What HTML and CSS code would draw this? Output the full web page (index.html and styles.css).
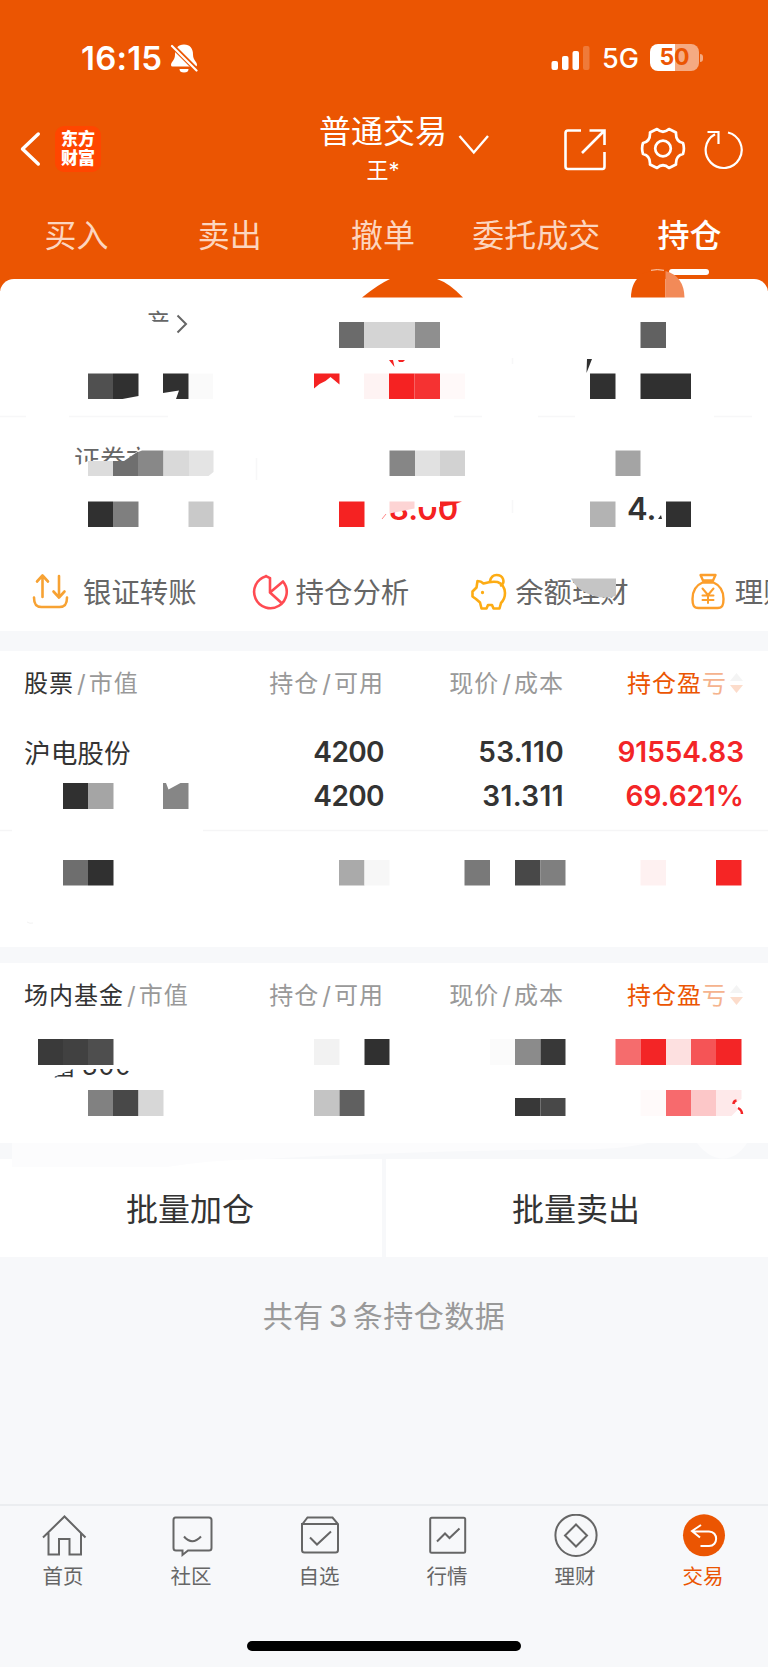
FILE: index.html
```html
<!DOCTYPE html>
<html lang="zh-CN">
<head>
    <meta charset="UTF-8">
    <meta name="viewport" content="width=device-width, initial-scale=1.0">
    <title>普通交易 - 持仓</title>
    <link rel="stylesheet" href="styles.css">
</head>
<body>
    <header class="header">
        <div class="status-bar">
            <span class="time">16:15</span>
            <svg class="bell" width="28" height="30" viewBox="170 42 28 30">
                <path d="M184 43.500c6 0 9 4 9 10 0 6 4 7 4 10.500q0 1.500-1.500 1.500H172.500q-1.500 0-1.500-1.500c0-3.500 4-4.500 4-10.500 0-6 3-10 9-10z" fill="#fff"/>
                <path d="M179.500 68h9a4.500 3.600 0 0 1-9 0z" fill="#fff"/>
                <path d="M171 43.500l26 26" stroke="#eb5502" stroke-width="5"/>
                <path d="M172 45l24.500 24.500" stroke="#fff" stroke-width="2.200" stroke-linecap="round"/>
            </svg>
            <div class="status-right">
                <svg width="40" height="26" viewBox="550 44 40 26" fill="#fff">
                    <rect x="550.500" y="60" width="6.500" height="9" rx="2"/>
                    <rect x="561" y="55" width="6.500" height="14" rx="2"/>
                    <rect x="571.500" y="50" width="6.500" height="19" rx="2"/>
                    <rect x="582" y="45" width="6.500" height="24" rx="2" opacity=".22"/>
                </svg>
                <span class="network">5G</span>
                <div class="battery">50</div>
            </div>
        </div>

        <div class="title-bar">
            <svg width="22" height="36" viewBox="20 130 22 36" fill="none" stroke="#fff" stroke-width="3.400" stroke-linecap="round" stroke-linejoin="round"><path d="M38.300 133L22.500 148l15.800 15"/></svg>
            <div class="logo">东方<br>财富</div>
            <div class="account">
                <div class="account-type">普通交易</div>
                <div class="account-name">王*</div>
            </div>
            <svg class="arrow" width="32" height="22" viewBox="458 132 32 22" fill="none" stroke="#fff" stroke-width="2.400"><path d="M459.500 135l14.300 16.500L488 135"/></svg>
            <div class="tools">
                <svg width="44" height="44" viewBox="563 126 44 44" fill="none" stroke="#fff" stroke-width="2.600">
                    <path d="M581 129.500h-13q-2.500 0-2.500 2.500v33.500q0 2.500 2.500 2.500h34.500q2 0 2-2.500V151"/>
                    <path d="M589.500 129.500h15V144M604 130l-22 22"/>
                </svg>
                <svg class="gear" width="46" height="46" viewBox="640 125 46 46" fill="none" stroke="#fff" stroke-width="2.700" stroke-linejoin="round">
                    <path d="M657 128q6 5.500 12 0l7 3.500q-.5 9 7 10.500 1.800 5.500 0 11-7.500 1.500-7 10.500l-7 3.500q-6-5.500-12 0l-7-3.500q.5-9-7-10.500-1.800-5.500 0-11 7.500-1.500 7-10.500z"/>
                    <circle cx="663" cy="147.500" r="7.800"/>
                </svg>
                <svg width="42" height="42" viewBox="705 126 42 42" fill="none" stroke="#fff" stroke-width="2.200">
                    <path d="M729 130.500a18 18 0 1 1-13 1.700M708.500 130h11v12"/>
                </svg>
            </div>
        </div>

        <nav class="tabs">
            <a class="tab">买入</a>
            <a class="tab">卖出</a>
            <a class="tab">撤单</a>
            <a class="tab">委托成交</a>
            <a class="tab active">持仓</a>
        </nav>
    </header>

    <section class="summary">
        <div class="assets">
            <div class="asset-total">产 <svg width="12" height="20" viewBox="176 313 12 20" fill="none" stroke="#666" stroke-width="2"><path d="M177.500 314.500l8.500 8.500-8.500 8.500"/></svg></div>
            <div class="asset-label">证券市</div>
            <div class="asset-values">
                <span class="asset-profit">8.00</span>
                <span class="asset-cash">4.</span>
            </div>
        </div>
        <div class="shortcuts">
            <div class="shortcut">
                <svg width="51" height="38" viewBox="32 573 51 38" fill="none" stroke="#f7a233" stroke-width="2.600" stroke-linecap="round" stroke-linejoin="round">
                    <path d="M42.500 597v-21M37 581.500l5.500-6 5.500 6M59 576v21M53.500 591.500l5.500 6 5.500-6M34 597.500c0 6 1.500 9.500 7.500 9.500h18c6 0 7.500-3.500 7.500-9.500"/>
                </svg>
                <span>银证转账</span>
            </div>
            <div class="shortcut">
                <svg width="44" height="38" viewBox="252 573 44 38" fill="none" stroke="#ff4b52" stroke-width="2.600" stroke-linecap="round" stroke-linejoin="round">
                    <path d="M266 576.200A16.300 16.300 0 1 0 283 581.500L270 592.500V578M270 592.500l11 10M266 576.200l4 2"/>
                </svg>
                <span>持仓分析</span>
            </div>
            <div class="shortcut">
                <svg width="44" height="38" viewBox="471 573 44 38" fill="none" stroke="#fdac14" stroke-width="2.600" stroke-linecap="round" stroke-linejoin="round">
                    <path d="M477.500 581q3.500 0 6 2.500 8-2.500 14-1.500 7 2.500 7.500 11 0 6-4 10l-1.500 5.500h-6l-1.500-3.500h-4l-1.500 3.500h-5l-1.500-6-4-3.500-3.500-2.500v-5l4-4zM490 581c1-4 3-6 6.500-6 7 0 9 7.500 4.500 10.500"/>
                    <circle cx="482.500" cy="592.500" r=".9" fill="#fdac14" stroke-width="1.500"/>
                </svg>
                <span>余额理财</span>
            </div>
            <div class="shortcut">
                <svg width="44" height="38" viewBox="691 573 44 38" fill="none" stroke="#fc9e2b" stroke-width="2.400" stroke-linecap="round" stroke-linejoin="round">
                    <path d="M700.500 575h15l-2.500 5.500h-10zM702.500 582.500c-7 3-10 9-10 16.500 0 6 1 9 6 9h19c5 0 6-3 6-9 0-7.500-3-13.500-10-16.500z"/>
                    <path d="M702.500 588.500l5.500 6.500 5.500-6.500M708 595v8M702.500 595.500h11M702.500 600h11" stroke-width="2"/>
                </svg>
                <span>理财</span>
            </div>
        </div>

        <svg class="mosaic" viewBox="0 269 768 362">
            <!-- header leftovers -->
            <path d="M362 297.500q16-13 28-18.500h47q12 4 26 18.500z" fill="#eb5502"/>
            <path d="M631 297.500q0-16 12-24 8-3.500 22.500-2.500v26.500z" fill="#eb5502"/>
            <path d="M665.500 271q18.500 5 19 26.500h-19z" fill="#f28a58"/>
            <path d="M651 270.300q6-1.300 13 0" stroke="#fbd5c0" fill="none"/>
            <!-- masks over the text -->
            <path fill="#fff" d="M140 322h33v14h-33zM145 314.500l9 7.500h-9zM74 467l14-6h37l15-12 12-4v30H74z"/>
            <path fill="#fff" d="M385 490h80v11l-8 1-18 5h-50z"/>
            <path stroke="#f7f7f8" stroke-width="1.500" d="M0 416.500h26M69 416.500h99M454 416.500h28M538 416.500h37M714 416.500h38M256.500 458v22M512.500 358v6M512.500 500v13"/>
            <g>
                <path fill="#6b6b6b" d="M339 322h25v26h-25z"/>
                <path fill="#d4d4d4" d="M364 322h51v26h-51z"/>
                <path fill="#8f8f8f" d="M415 322h25v26h-25z"/>
                <path fill="#616161" d="M640.500 322H666v26h-25.500z"/>
            </g>
            <g>
                <path fill="#505050" d="M88 373.500h25V399H88z"/>
                <path fill="#303030" d="M113 373.500h25.500V396l-16 3H113zM163 373.500h25.500V399H176l3-8.500-16 2.500z"/>
                <path fill="#fafafa" d="M189 373.500h24V399h-24z"/>
                <path fill="#f52222" d="M314 373.500h25.500v11l-9-7.500-5 4-6 3-5.500 4.500zM389 360h4l1.500 7zM398 360h7l-2 2h-4zM389 373.500h25.500V399H389z"/>
                <path fill="#fef3f3" d="M364 373.500h25V399h-25z"/>
                <path fill="#f53232" d="M414.500 373.500H440V399h-25.500z"/>
                <path fill="#fff9f9" d="M440 373.500h25V399h-25z"/>
                <path fill="#303030" d="M587 359h5l-5.500 14zM590 373.500h25.500V399H590zM640.500 373.500H691V399h-50.500z"/>
            </g>
            <g>
                <path fill="#dcdcdc" d="M88 461h25v15H88z"/>
                <path fill="#6f6f6f" d="M113 461h11l14-9.500V476h-25z"/>
                <path fill="#888" d="M138 452l4-1.500h21.500V476H138z"/>
                <path fill="#d9d9d9" d="M163.500 450.500H189V476h-25.500z"/>
                <path fill="#e4e4e4" d="M189 450.500h24.500V472l-5 4H189z"/>
                <path fill="#868686" d="M389.500 450.500H415V476h-25.500z"/>
                <path fill="#e1e1e1" d="M415 450.500h25V476h-25z"/>
                <path fill="#d2d2d2" d="M440 450.500h25V476h-25z"/>
                <path fill="#a4a4a4" d="M615.500 450.500h25V476h-25z"/>
            </g>
            <g>
                <path fill="#303030" d="M88 501.500h25V527H88zM666 501.500h25V527h-25z"/>
                <path fill="#7f7f7f" d="M113 501.500h25.500V527H113z"/>
                <path fill="#c9c9c9" d="M188.500 501.500h25V527h-25z"/>
                <path fill="#f52222" d="M339 501.500h25.500V527H339zM440 501.500h22l-8 3-14 2.500z"/>
                <path fill="#fdd4d4" d="M389.500 501.500h25v7l-25 5z"/>
                <path fill="#b3b3b3" d="M590 501.500h25.500V527H590z"/>
                <path d="M382 519l4-5" stroke="#f88"/>
                <path fill="#303030" d="M658 519l3-4 1 4z"/>
            </g>
            <path fill="#c5c5c5" d="M571 578.500h45V596q-12 3-22 0-17-5-23-17.500z"/>
        </svg>
    </section>

    <section class="holdings stock">
        <div class="table-head">
            <div><b>股票</b><s>/</s>市值</div>
            <div>持仓<s>/</s>可用</div>
            <div>现价<s>/</s>成本</div>
            <div class="sort"><span>持仓盈<i>亏</i></span><svg width="15" height="22" viewBox="0 0 15 22"><path d="M7.500 0L14 8H1z" fill="#f4f4f4"/><path d="M1 12h13l-6.500 8z" fill="#fcdccb"/></svg></div>
        </div>
        <div class="table-row">
            <div class="name">沪电股份</div>
            <div class="qty">4200<br>4200</div>
            <div class="price">53.110<br>31.311</div>
            <div class="up">91554.83<br>69.621%</div>
        </div>
        <svg class="mosaic" viewBox="0 651 768 296">
            <path stroke="#f5f5f6" stroke-width="1.500" d="M0 830.500h12M203 830.500h565"/>
            <path stroke="#f3f3f3" fill="none" d="M27 922q3 2 6 1"/>
            <path fill="#303030" d="M63 783h25v26H63zM88 860h25.500v25.500H88z"/>
            <path fill="#a5a5a5" d="M88 783h25.500v26H88z"/>
            <path fill="#868686" d="M163 783h3l2.500 6.500 12-6.500h8v26H163z"/>
            <path fill="#6e6e6e" d="M63 860h25v25.500H63z"/>
            <path fill="#aaa" d="M339 860h25.500v25.500H339z"/>
            <path fill="#f7f7f7" d="M364.500 860h25v25.500h-25z"/>
            <path fill="#797979" d="M464.500 860H490v25.500h-25.500z"/>
            <path fill="#484848" d="M515 860h25.500v25.500H515z"/>
            <path fill="#7f7f7f" d="M540.500 860h25v25.500h-25z"/>
            <path fill="#fef1f1" d="M640.500 860H666v25.500h-25.500z"/>
            <path fill="#f52525" d="M716 860h25.500v25.500H716z"/>
        </svg>
    </section>

    <section class="holdings fund">
        <div class="table-head">
            <div><b>场内基金</b><s>/</s>市值</div>
            <div>持仓<s>/</s>可用</div>
            <div>现价<s>/</s>成本</div>
            <div class="sort"><span>持仓盈<i>亏</i></span><svg width="15" height="22" viewBox="0 0 15 22"><path d="M7.500 0L14 8H1z" fill="#f4f4f4"/><path d="M1 12h13l-6.500 8z" fill="#fcdccb"/></svg></div>
        </div>
        <div class="fund-name">富<span>300</span></div>
        <svg class="mosaic" viewBox="0 963 768 205">
            <path fill="#fff" d="M40 1040h100v32l-12-1-9-2H73l-19 8H40z"/>
            <path fill="#3a3a3a" d="M38 1039h25v26H38z"/>
            <path fill="#414141" d="M63 1039h25v26H63z"/>
            <path fill="#4e4e4e" d="M88 1039h25.500v26H88z"/>
            <path fill="#f2f2f2" d="M314 1039h25.500v26H314z"/>
            <path fill="#303030" d="M364.500 1039h25v26h-25z"/>
            <path fill="#fbfbfb" d="M490 1039h25v26h-25z"/>
            <path fill="#8b8b8b" d="M515 1039h25.500v26H515z"/>
            <path fill="#383838" d="M540.500 1039h25v26h-25zM515 1098h25.500v18H515z"/>
            <path fill="#f56c6d" d="M615.500 1039h25v26h-25z"/>
            <path fill="#f32526" d="M640.500 1039H666v26h-25.500zM716 1039h25.500v26H716z"/>
            <path fill="#fde0e0" d="M666 1039h25v26h-25z"/>
            <path fill="#f55456" d="M691 1039h25v26h-25z"/>
            <path fill="#818181" d="M88 1090h25v26H88z"/>
            <path fill="#484848" d="M113 1090h25.500v26H113zM540.500 1098h25v18h-25z"/>
            <path fill="#d7d7d7" d="M138.500 1090h25v26h-25z"/>
            <path fill="#c4c4c4" d="M314 1090h25.500v26H314z"/>
            <path fill="#606060" d="M339.500 1090h25v26h-25z"/>
            <path fill="#fffafa" d="M640.500 1090H666v26h-25.500z"/>
            <path fill="#f76a6d" d="M666 1090h25v26h-25z"/>
            <path fill="#fcc7c8" d="M691 1090h25v26h-25z"/>
            <path fill="#fee9ea" d="M716 1090h25.500v9l-6 4 2 7-6 6H716z"/>
            <path stroke="#f32526" stroke-width="2.500" fill="none" d="M733.500 1104q0-3 3-3.500M738 1108q4 2 4 6"/>
            <path fill="#fcfcfd" d="M12 1143h636q-27 6.500-70 6.500-160 1-315 9.500-55 1-96 8H12zM697 1143h50q-10 15.500-24 15.500t-26-15.500z"/>
        </svg>
    </section>

    <div class="batch">
        <button class="batch-button">批量加仓</button>
        <button class="batch-button">批量卖出</button>
    </div>

    <p class="total">共有<span>3</span>条持仓数据</p>

    <footer class="footer">
        <nav class="bottom-nav">
            <a class="nav-item">
                <svg width="46" height="44" viewBox="41 1514 46 44"><path d="M43 1537.500l21.500-21 21 21M48.500 1533v21.500h10.500v-15.500h10.500v15.500H81V1533"/></svg>
                <span>首页</span>
            </a>
            <a class="nav-item">
                <svg width="46" height="44" viewBox="169 1514 46 44"><path d="M175.500 1517.500h33.500q2.500 0 2.500 2.500v28q0 2.500-2.500 2.500h-21l-5.500 4.500v-4.500H176q-2.500 0-2.500-2.500v-28q0-2.500 2-2.500zM184 1536.500q8 9.500 17 0"/></svg>
                <span>社区</span>
            </a>
            <a class="nav-item">
                <svg width="46" height="44" viewBox="297 1514 46 44"><path d="M302.500 1524l5-6.500h25l5.500 6.500v26q0 2.500-2.500 2.500h-31q-2.500 0-2.500-2.500v-26h36M310 1537.500l7 7 14-13"/></svg>
                <span>自选</span>
            </a>
            <a class="nav-item">
                <svg width="46" height="44" viewBox="425 1514 46 44"><rect x="430.200" y="1517.700" width="35" height="35" rx="1.500"/><path d="M437 1541.500l8-8 4.500 4.500 10-9.500"/></svg>
                <span>行情</span>
            </a>
            <a class="nav-item">
                <svg width="46" height="44" viewBox="553 1514 46 44"><circle cx="576" cy="1535.300" r="20.600"/><path d="M576 1524.500l11 11-11 11-11-11z"/></svg>
                <span>理财</span>
            </a>
            <a class="nav-item current">
                <svg width="46" height="44" viewBox="681 1514 46 44"><circle cx="704" cy="1535.300" r="21" fill="#eb5502" stroke="none"/><path d="M701 1525l-9 6 8 6.500M692.500 1531.500h16.500c9.500 0 9.500 14.500 0 14.500h-8.500" stroke="#fff"/></svg>
                <span>交易</span>
            </a>
        </nav>
        <div class="home-indicator"></div>
    </footer>
</body>
</html>
```

FILE: styles.css
```css
* {
    box-sizing: border-box;
}
body {
    margin: 0;
    width: 768px;
    height: 1667px;
    display: flex;
    flex-direction: column;
    background-color: #f7f8fa;
    font-family: Inter, "Noto Sans CJK SC", sans-serif;
    color: #333;
    overflow: hidden;
}
svg {
    display: block;
    flex: none;
}
.header {
    height: 291px;
    flex: none;
    background-color: #eb5502;
    color: #fff;
}

/* status bar */
.status-bar {
    height: 115px;
    padding: 0 65px 0 81px;
    display: flex;
    align-items: center;
}
.time {
    width: 89px;
    font-size: 33px;
    font-weight: 600;
    letter-spacing: 0.2px;
}
.status-right {
    margin-left: auto;
    display: flex;
    align-items: center;
}
.network {
    width: 37px;
    margin: 2px 11px 0 11px;
    font-size: 27px;
    font-weight: 500;
    line-height: 28px;
}
.battery {
    width: 49px;
    height: 27px;
    margin-right: 4px;
    border-radius: 8px;
    background: linear-gradient(90deg, #fff 51%, #f5aa82 51%);
    color: #eb5502;
    font-size: 23px;
    font-weight: 700;
    line-height: 27px;
    text-align: center;
    position: relative;
}
.battery::after {
    content: "";
    position: absolute;
    right: -4px;
    top: 10px;
    width: 3px;
    height: 8px;
    border-radius: 0 3px 3px 0;
    background-color: #f5aa82;
}

/* title bar */
.title-bar {
    height: 75px;
    padding: 0 22px 8px 20px;
    display: flex;
    align-items: center;
}
.logo {
    width: 46px;
    height: 46px;
    margin-left: 13px;
    padding-top: 4px;
    border-radius: 9px;
    background-color: #ff4600;
    font-size: 17px;
    font-weight: 900;
    line-height: 19px;
    text-align: center;
}
.account {
    width: 130px;
    margin-left: 217px;
    text-align: center;
}
.account-type {
    font-size: 32px;
    line-height: 40px;
    white-space: nowrap;
}
.account-name {
    padding-top: 3px;
    font-size: 22px;
    line-height: 30px;
}
.arrow {
    margin-left: 10px;
    margin-bottom: 10px;
}
.tools {
    margin-left: auto;
    display: flex;
    align-items: center;
}
.gear {
    margin: 0 18px 0 33px;
}

/* tabs */
.tabs {
    display: grid;
    grid-template-columns: repeat(5, 1fr);
    margin-right: 2px;
}
.tab {
    height: 88px;
    display: flex;
    flex-direction: column;
    align-items: center;
    padding-top: 23px;
    font-size: 32px;
    line-height: 46px;
    white-space: nowrap;
    color: #fcd5bf;
}
.tab.active {
    color: #fff;
    font-weight: 500;
}
.tab.active::after {
    content: "";
    width: 40px;
    height: 6px;
    margin-top: 10px;
    border-radius: 3px;
    background-color: #fff;
}

/* summary card */
.summary {
    height: 352px;
    margin-top: -12px;
    flex: none;
    border-radius: 14px 14px 0 0;
    background-color: #fff;
    position: relative;
}
.mosaic {
    position: absolute;
    left: 0;
    bottom: 0;
    width: 768px;
}
.assets {
    height: 274px;
}
.asset-total {
    padding: 26px 0 0 146px;
    display: flex;
    align-items: center;
    gap: 6px;
    height: 62px;
    font-size: 24px;
    line-height: 28px;
    color: #666;
}
.asset-total svg {
    margin-top: 1px;
}
.asset-label {
    margin-top: 99px;
    padding-left: 74px;
    font-size: 26px;
    line-height: 40px;
    color: #666;
}
.asset-values {
    padding: 9px 0 0 389px;
    display: flex;
    font-size: 31px;
    font-weight: 600;
    line-height: 40px;
}
.asset-profit {
    width: 238px;
    color: #f52222;
}
.shortcuts {
    height: 78px;
    padding-left: 32px;
    display: flex;
    overflow: hidden;
}
.shortcut {
    width: 219.6px;
    flex: none;
    display: flex;
    align-items: center;
    height: 78px;
    font-size: 28.4px;
    line-height: 40px;
    color: #666;
}
.shortcut span {
    padding-top: 2px;
}

/* holdings tables */
.holdings {
    background-color: #fff;
    flex: none;
    position: relative;
}
.stock {
    height: 296px;
    margin-top: 20px;
}
.fund {
    height: 180px;
    margin-top: 16px;
}
.table-head,
.table-row {
    display: grid;
    grid-template-columns: 200px 160px 180px 180px;
    padding: 0 24px 0 24px;
    text-align: right;
}
.table-head > :first-child,
.table-row > :first-child {
    text-align: left;
}
.table-head {
    height: 64px;
    font-size: 24px;
    letter-spacing: 1px;
    line-height: 65px;
    color: #999;
}
.table-head b {
    font-weight: 400;
    color: #333;
}
.table-head s {
    margin: 0 2px 0 3px;
    text-decoration: none;
}
.table-head .sort {
    display: flex;
    align-items: center;
    justify-content: flex-end;
    color: #eb5502;
}
.sort span {
    margin-right: 2px;
}
.sort i {
    font-style: normal;
    color: #f5b38e;
}
.table-row {
    padding-top: 15px;
    font-size: 28px;
    font-weight: 600;
    line-height: 44px;
}
.table-row .name {
    padding-top: 1px;
    font-size: 26.7px;
    font-weight: 400;
}
.qty {
    letter-spacing: -0.6px;
}
.price {
    letter-spacing: 0.4px;
}
.up {
    color: #f32527;
}
.fund-name {
    padding: 19px 0 0 51px;
    font-size: 25px;
    line-height: 40px;
}
.fund-name span {
    margin-left: 6px;
    letter-spacing: 1px;
}

/* the mosaic hangs over the gap below the fund table */
.fund .mosaic {
    bottom: -25px;
    z-index: 1;
}

/* batch buttons */
.batch {
    height: 98px;
    margin-top: 16px;
    flex: none;
    display: grid;
    grid-template-columns: 1fr 1fr;
    gap: 4px;
}
.batch-button {
    padding: 0 2px 2px 0;
    border: none;
    background-color: #fff;
    font-family: inherit;
    font-size: 32px;
    color: #333;
}
.total {
    margin: 38px 0 0;
    font-size: 30px;
    line-height: 42px;
    letter-spacing: 0.5px;
    text-align: center;
    color: #999;
}
.total span {
    margin: 0 5px;
}

/* bottom navigation */
.footer {
    height: 163px;
    margin-top: auto;
    border-top: 2px solid #ebedf0;
}
.bottom-nav {
    display: grid;
    grid-template-columns: repeat(6, 1fr);
}
.nav-item {
    display: flex;
    flex-direction: column;
    align-items: center;
    padding-top: 8px;
    font-size: 20.5px;
    line-height: 38px;
    color: #666;
}
.nav-item span {
    padding-right: 2px;
}
.nav-item svg {
    fill: none;
    stroke: #666;
    stroke-width: 2;
}
.nav-item.current {
    color: #eb5502;
}
.home-indicator {
    width: 274px;
    height: 10px;
    margin: 45px auto 0;
    border-radius: 5px;
    background-color: #000;
}
```
